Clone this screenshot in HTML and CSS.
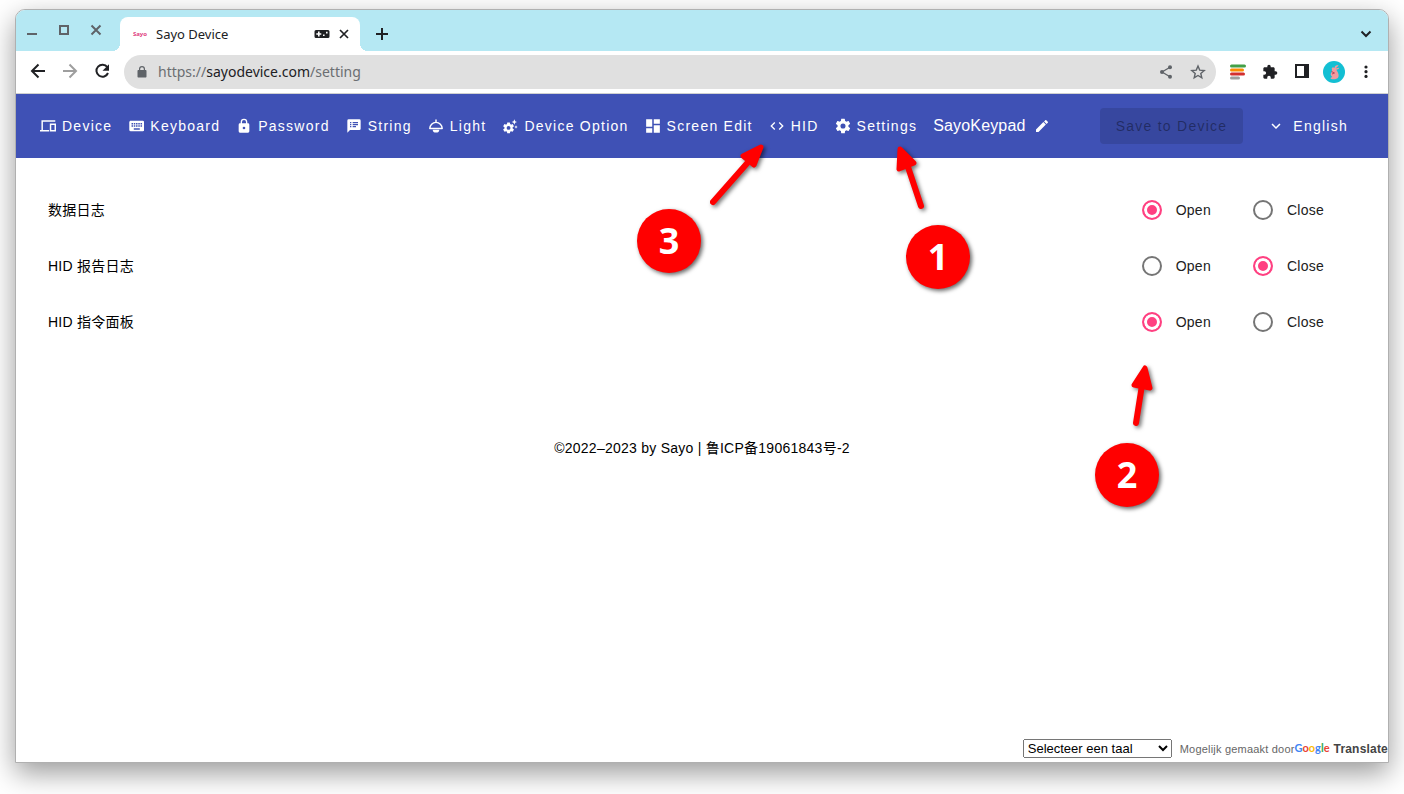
FILE: index.html
```html
<!DOCTYPE html>
<html lang="en">
<head>
<meta charset="utf-8">
<title>Sayo Device</title>
<link rel="stylesheet" href="styles.css">
</head>
<body>
<div class="window">
  <header class="tabstrip">
    <div class="window-buttons">
      <button class="icon-btn" aria-label="Minimize"><svg class="i16" viewBox="0 0 16 16"><path d="M3 12h10" stroke="currentColor" stroke-width="2"/></svg></button>
      <button class="icon-btn" aria-label="Maximize"><svg class="i16" viewBox="0 0 16 16"><path d="M4 4h8v8H4z" fill="none" stroke="currentColor" stroke-width="2"/></svg></button>
      <button class="icon-btn" aria-label="Close window"><svg class="i16" viewBox="0 0 16 16"><path d="M3.500 3.500l9 9M12.500 3.500l-9 9" stroke="currentColor" stroke-width="2"/></svg></button>
    </div>
    <div class="tab">
      <svg class="i16" viewBox="0 0 16 16"><text class="favicon-text" x="8" y="10" text-anchor="middle">Sayo</text></svg>
      <span class="tab-title">Sayo Device</span>
      <svg class="i16" viewBox="0 0 16 16"><path fill="currentColor" fill-rule="evenodd" d="M2 4h12a1.500 1.500 0 0 1 1.500 1.500v5A1.500 1.500 0 0 1 14 12H2A1.500 1.500 0 0 1 .5 10.500v-5A1.500 1.500 0 0 1 2 4zM4 5.500v1.700H2.300v1.600H4v1.700h1.600V8.800h1.700V7.200H5.600V5.500zM9 8.500v1.600h1.600V8.500zM12 5.800v1.600h1.600V5.800z"/></svg>
      <button class="icon-btn" aria-label="Close tab"><svg class="i16" viewBox="0 0 16 16"><path d="M4 4l8 8M12 4l-8 8" stroke="currentColor" stroke-width="1.700"/></svg></button>
    </div>
    <button class="icon-btn new-tab" aria-label="New tab"><svg class="i16" viewBox="0 0 16 16"><path d="M8 2v12M2 8h12" stroke="currentColor" stroke-width="2"/></svg></button>
    <button class="icon-btn tab-search" aria-label="Search tabs"><svg class="i16" viewBox="0 0 16 16"><path d="M3.500 5.500L8 10l4.500-4.500" fill="none" stroke="currentColor" stroke-width="2"/></svg></button>
  </header>

  <div class="toolbar">
    <button class="icon-btn" aria-label="Back"><svg class="i20" viewBox="0 0 20 20"><path d="M17 9H4M10.500 2.500L4 9l6.500 6.500" fill="none" stroke="currentColor" stroke-width="2"/></svg></button>
    <button class="icon-btn faded" aria-label="Forward"><svg class="i20" viewBox="0 0 20 20"><path d="M3 9h13M9.500 2.500L16 9l-6.500 6.500" fill="none" stroke="currentColor" stroke-width="2"/></svg></button>
    <button class="icon-btn" aria-label="Reload"><svg class="i20" viewBox="0 0 20 20"><path d="M15.300 5.200A6 6 0 1 0 16 11" fill="none" stroke="currentColor" stroke-width="2"/><path d="M17 2.200v6.500h-6.500z" fill="currentColor"/></svg></button>
    <div class="omnibox">
      <svg class="i16 lock" viewBox="0 0 16 16"><path fill="currentColor" fill-rule="evenodd" d="M5 6V5a3 3 0 0 1 6 0v1h.5c.6 0 1 .4 1 1v5.500c0 .6-.4 1-1 1h-7c-.6 0-1-.4-1-1V7c0-.6.4-1 1-1zm1.200 0h3.600V5a1.800 1.800 0 0 0-3.600 0z"/></svg>
      <div class="url" role="textbox" contenteditable="true" spellcheck="false" aria-label="Address">https://<b>sayodevice.com</b>/setting</div>
      <button class="icon-btn" aria-label="Share"><svg class="i16" viewBox="0 0 16 16"><g fill="currentColor"><circle cx="12" cy="3.200" r="2"/><circle cx="4" cy="8" r="2"/><circle cx="12" cy="12.800" r="2"/></g><path d="M12 3.200L4 8l8 4.800" fill="none" stroke="currentColor" stroke-width="1.300"/></svg></button>
      <button class="icon-btn" aria-label="Bookmark"><svg class="i16" viewBox="0 0 16 16"><path d="M8 2l1.700 4.100 4.500.4-3.400 2.900 1 4.400L8 11.500l-3.800 2.300 1-4.400-3.400-2.900 4.500-.4z" fill="none" stroke="currentColor" stroke-width="1.400"/></svg></button>
    </div>
    <button class="icon-btn" aria-label="Lines extension"><svg class="i16" viewBox="0 0 16 16"><g stroke-width="3" stroke-linecap="round"><path d="M1.500 2h13" stroke="#43a047"/><path d="M1.500 6h11" stroke="#fb8c00"/><path d="M1.500 10h12" stroke="#d32f2f"/><path d="M1.500 14h7" stroke="#9e9e9e"/></g></svg></button>
    <button class="icon-btn" aria-label="Extensions"><svg class="i16" viewBox="0 0 24 24"><path fill="currentColor" d="M20.500 11H19V7c0-1.100-.9-2-2-2h-4V3.500a2.500 2.500 0 0 0-5 0V5H4c-1.100 0-2 .9-2 2v3.800h1.500a2.700 2.700 0 0 1 0 5.400H2V20c0 1.100.9 2 2 2h3.800v-1.500a2.700 2.700 0 0 1 5.400 0V22H17c1.100 0 2-.9 2-2v-4h1.500a2.500 2.500 0 0 0 0-5z"/></svg></button>
    <button class="icon-btn" aria-label="Side panel"><svg class="i16" viewBox="0 0 16 16"><path fill="currentColor" fill-rule="evenodd" d="M1 0h14v14H1zM3 2v10h7V2z"/></svg></button>
    <button class="icon-btn avatar" aria-label="Profile"><svg viewBox="0 0 22 22"><circle cx="11" cy="11" r="11" fill="#13bfd3"/><path d="M9 8.500C8 6.500 10 6 11.500 7c0-2 1.500-3 4-3-.5 1.500-1.500 2.300-2.700 3 1 .8 2.700-.8 3.500 0-.6 1.200-1.800 1.500-3 1.700.8 1.800 2.700 3.500 2.300 6.300-.2 1.800-1.500 3-3.600 3.200-2 .2-3.500 0-4.500-.8.300-1 1-1.300 1.800-1.500C7.500 14.500 7 12.500 8.800 11z" fill="#f29a9f"/><path d="M8.500 10.500l3 1.500-2.500 1" stroke="#b9475f" fill="none"/></svg></button>
    <button class="icon-btn" aria-label="Menu"><svg class="i16" viewBox="0 0 16 16"><g fill="currentColor"><circle cx="8" cy="3" r="1.600"/><circle cx="8" cy="7.700" r="1.600"/><circle cx="8" cy="12.400" r="1.600"/></g></svg></button>
  </div>

  <nav class="appbar">
    <a class="nav-link" href="#device"><svg class="i16" viewBox="1 1 22 22"><path d="M22 5H4v13M1 18.500h12.500M15.500 9.500h6.500v9h-6.500z" fill="none" stroke="currentColor" stroke-width="2"/></svg>Device</a>
    <a class="nav-link" href="#keyboard"><svg class="i16" viewBox="0.300 1.300 21.300 21.300"><path fill="currentColor" d="M19 10h-2V8h2m0 5h-2v-2h2m-3-1h-2V8h2m0 5h-2v-2h2m0 6H8v-2h8m-9-5H5V8h2m0 5H5v-2h2m1 0h2v2H8m0-5h2v2H8m3 1h2v2h-2m0-5h2v2h-2m9-5H4c-1.110 0-2 .89-2 2v10a2 2 0 0 0 2 2h16a2 2 0 0 0 2-2V7c0-1.110-.9-2-2-2z"/></svg>Keyboard</a>
    <a class="nav-link" href="#password"><svg class="i16" viewBox="0 0 24 24"><path fill="currentColor" d="M12 17a2 2 0 0 0 2-2 2 2 0 0 0-2-2 2 2 0 0 0-2 2 2 2 0 0 0 2 2m6-9a2 2 0 0 1 2 2v10a2 2 0 0 1-2 2H6a2 2 0 0 1-2-2V10a2 2 0 0 1 2-2h1V6a5 5 0 0 1 10 0v2h1m-6-5a3 3 0 0 0-3 3v2h6V6a3 3 0 0 0-3-3z"/></svg>Password</a>
    <a class="nav-link" href="#string"><svg class="i16" viewBox="0 0 24 24"><path fill="currentColor" fill-rule="evenodd" d="M20 2H4a2 2 0 0 0-2 2v18l4-4h14a2 2 0 0 0 2-2V4a2 2 0 0 0-2-2zM8 14H6v-2h2zm0-3H6V9h2zm0-3H6V6h2zm7 6h-5v-2h5zm3-3h-8V9h8zm0-3h-8V6h8z"/></svg>String</a>
    <a class="nav-link" href="#light"><svg class="i16" viewBox="1 1 22 22"><path d="M12 3v4M3.500 15.500a8.500 8.500 0 0 1 17 0z" fill="none" stroke="currentColor" stroke-width="2" stroke-linejoin="round"/><path d="M7.500 17h9a4.500 4 0 0 1-9 0z" fill="currentColor"/></svg>Light</a>
    <a class="nav-link" href="#option"><svg class="i16" viewBox="0 0 24 24"><g transform="translate(0 5) scale(.82)"><path fill="currentColor" d="M12 15.500A3.500 3.500 0 0 1 8.500 12 3.500 3.500 0 0 1 12 8.500a3.500 3.500 0 0 1 3.500 3.500 3.500 3.500 0 0 1-3.500 3.500m7.430-2.530c.04-.32.070-.64.070-.97s-.03-.66-.07-1l2.110-1.630c.19-.15.240-.42.120-.64l-2-3.460c-.12-.22-.39-.31-.61-.22l-2.490 1c-.52-.39-1.060-.73-1.690-.98l-.37-2.650A.506.506 0 0 0 14 2h-4c-.25 0-.46.180-.5.420l-.37 2.650c-.63.250-1.170.590-1.690.980l-2.490-1c-.22-.09-.49 0-.61.220l-2 3.460c-.13.220-.07.490.120.640L4.570 11c-.04.340-.07.670-.07 1s.03.650.070.970l-2.110 1.660c-.19.150-.25.420-.12.640l2 3.460c.12.220.39.300.61.220l2.490-1.010c.52.400 1.060.740 1.690.990l.37 2.650c.04.240.25.420.5.420h4c.25 0 .46-.18.5-.42l.37-2.650c.63-.26 1.170-.59 1.690-.99l2.490 1.010c.22.080.49 0 .61-.22l2-3.460c.12-.22.070-.49-.12-.64z"/></g><path fill="currentColor" d="M18.500 2l1.200 2.800 2.800 1.200-2.800 1.200L18.500 10l-1.200-2.800L14.500 6l2.800-1.200zM21 11l.8 1.700 1.700.8-1.700.8L21 16l-.8-1.700-1.700-.8 1.700-.8z"/></svg>Device Option</a>
    <a class="nav-link" href="#screen"><svg class="i16" viewBox="1.500 1.500 21 21"><path fill="currentColor" d="M13 3v6h8V3m-8 18h8V11h-8M3 21h8v-6H3m0-2h8V3H3v10z"/></svg>Screen Edit</a>
    <a class="nav-link" href="#hid"><svg class="i16" viewBox="0 0 24 24"><path fill="currentColor" d="M14.600 16.600l4.600-4.600-4.600-4.600L16 6l6 6-6 6-1.400-1.400m-5.200 0L4.800 12l4.600-4.600L8 6l-6 6 6 6 1.400-1.400z"/></svg>HID</a>
    <a class="nav-link" href="#settings"><svg class="i16" viewBox="1 1 22 22"><path fill="currentColor" d="M12 15.500A3.500 3.500 0 0 1 8.500 12 3.500 3.500 0 0 1 12 8.500a3.500 3.500 0 0 1 3.500 3.500 3.500 3.500 0 0 1-3.500 3.500m7.430-2.530c.04-.32.070-.64.070-.97s-.03-.66-.07-1l2.110-1.630c.19-.15.240-.42.120-.64l-2-3.460c-.12-.22-.39-.31-.61-.22l-2.490 1c-.52-.39-1.060-.73-1.690-.98l-.37-2.650A.506.506 0 0 0 14 2h-4c-.25 0-.46.180-.5.420l-.37 2.650c-.63.250-1.170.590-1.690.980l-2.490-1c-.22-.09-.49 0-.61.220l-2 3.460c-.13.220-.07.490.120.640L4.570 11c-.04.340-.07.670-.07 1s.03.650.070.970l-2.110 1.660c-.19.150-.25.420-.12.640l2 3.460c.12.220.39.300.61.220l2.490-1.010c.52.400 1.060.740 1.690.990l.37 2.650c.04.240.25.420.5.420h4c.25 0 .46-.18.5-.42l.37-2.650c.63-.26 1.170-.59 1.690-.99l2.490 1.010c.22.080.49 0 .61-.22l2-3.460c.12-.22.070-.49-.12-.64z"/></svg>Settings</a>
    <button class="device-name">SayoKeypad<svg class="i16" viewBox="0 0 24 24"><path fill="currentColor" d="M20.710 7.040c.39-.39.390-1.040 0-1.410l-2.340-2.340c-.37-.39-1.020-.39-1.410 0l-1.840 1.830 3.750 3.750M3 17.250V21h3.750L17.810 9.930l-3.750-3.750z"/></svg></button>
    <button class="save" disabled>Save to Device</button>
    <button class="language"><svg class="i18" viewBox="0 0 24 24"><path fill="currentColor" d="M7.410 8.580L12 13.170l4.590-4.590L18 10l-6 6-6-6z"/></svg>English</button>
  </nav>

  <main class="settings">
    <fieldset class="row">
      <legend class="row-title" lang="zh">数据日志</legend>
      <div class="choices">
        <label class="choice"><input class="radio" type="radio" name="data-log" checked>Open</label>
        <label class="choice"><input class="radio" type="radio" name="data-log">Close</label>
      </div>
    </fieldset>
    <fieldset class="row">
      <legend class="row-title" lang="zh">HID 报告日志</legend>
      <div class="choices">
        <label class="choice"><input class="radio" type="radio" name="hid-log">Open</label>
        <label class="choice"><input class="radio" type="radio" name="hid-log" checked>Close</label>
      </div>
    </fieldset>
    <fieldset class="row">
      <legend class="row-title" lang="zh">HID 指令面板</legend>
      <div class="choices">
        <label class="choice"><input class="radio" type="radio" name="hid-panel" checked>Open</label>
        <label class="choice"><input class="radio" type="radio" name="hid-panel">Close</label>
      </div>
    </fieldset>
  </main>

  <footer class="copyright">©2022–2023 by Sayo | 鲁ICP备19061843号-2</footer>

  <div class="translate">
    <select class="translate-select" aria-label="Selecteer een taal"><option>Selecteer een taal</option></select>
    <div class="translate-credit">Mogelijk gemaakt door<a class="google" href="#translate"><span class="google-logo"><span class="g-blue">G</span><span class="g-red">o</span><span class="g-yellow">o</span><span class="g-blue">g</span><span class="g-green">l</span><span class="g-red">e</span></span><span>Translate</span></a></div>
  </div>
</div>

<svg class="arrows" width="1404" height="794" viewBox="0 0 1404 794" aria-hidden="true">
  <g fill="red" stroke="red" stroke-width="5" stroke-linecap="round" stroke-linejoin="round">
    <path d="M761 147l-18 9 11 9z"/><path d="M713 202l37-42" stroke-width="6"/>
    <path d="M900 149l14 14-15 6z"/><path d="M921 206l-14-42" stroke-width="6"/>
    <path d="M1145 368l5 20-16-3z"/><path d="M1136 423l6-38" stroke-width="6"/>
  </g>
</svg>
<div class="marker marker-1">1</div>
<div class="marker marker-2">2</div>
<div class="marker marker-3">3</div>
</body>
</html>
```
FILE: styles.css
```css
* { box-sizing: border-box; }

body {
  margin: 0;
  min-height: 100vh;
  padding: 9px 15px 31px;
  display: flex;
  flex-direction: column;
  position: relative;
  overflow: hidden;
  background: #fff;
  color: #000;
  font-family: "Liberation Sans", "Noto Sans CJK SC", sans-serif;
  font-size: 14px;
  line-height: 20px;
}

button { border: 0; padding: 0; background: none; color: inherit; font: inherit; letter-spacing: inherit; }
svg { display: block; flex: none; }
.i16 { width: 16px; height: 16px; }
.i18 { width: 18px; height: 18px; }
.i20 { width: 20px; height: 20px; }

.window {
  flex: 1;
  display: flex;
  flex-direction: column;
  border: 1px solid #b0b0b0;
  border-radius: 10px 10px 0 0;
  background: #fff;
  box-shadow: 0 10px 28px rgba(0, 0, 0, .4);
}

.tabstrip {
  display: flex;
  align-items: flex-end;
  height: 41px;
  border-radius: 9px 9px 0 0;
  background: #b5e8f3;
  color: #202124;
}
.window-buttons { display: flex; gap: 16px; padding: 0 16px 13px 8px; color: #5f6368; }
.tab {
  position: relative;
  display: flex;
  align-items: center;
  width: 240px;
  height: 34px;
  padding: 0 8px 0 12px;
  gap: 6px;
  border-radius: 8px 8px 0 0;
  background: #fff;
  font: 13px/18px "Noto Sans", sans-serif;
}
.tab::before, .tab::after {
  content: "";
  position: absolute;
  bottom: 0;
  width: 8px;
  height: 8px;
}
.tab::before { right: 100%; background: radial-gradient(circle at 0 0, transparent 8px, #fff 8px); }
.tab::after { left: 100%; background: radial-gradient(circle at 100% 0, transparent 8px, #fff 8px); }
.favicon-text { fill: #e0407f; font: bold 6px "Noto Sans", sans-serif; }
.tab-title { flex: 1; padding-left: 2px; }
.new-tab { padding: 0 0 9px 14px; }
.tab-search { margin-left: auto; padding: 0 14px 9px 0; }

.toolbar {
  display: flex;
  align-items: center;
  gap: 12px;
  height: 43px;
  padding: 0 12px;
  border-bottom: 1px solid #d0d0d0;
  color: #202124;
}
.toolbar > .icon-btn { width: 20px; display: flex; justify-content: center; }
.toolbar > .faded { color: #9e9e9e; }
.omnibox {
  flex: 1;
  display: flex;
  align-items: center;
  gap: 16px;
  height: 34px;
  padding: 0 10px;
  border-radius: 17px;
  background: #e0e0e0;
  color: #5f6368;
}
.lock { margin-right: -8px; }
.url { flex: 1; outline: 0; color: #6b6e72; font: 14px/20px "Noto Sans", sans-serif; }
.url b { color: #202124; font-weight: 400; }
.avatar svg { width: 22px; height: 22px; }

.appbar {
  display: flex;
  align-items: center;
  gap: 16px;
  height: 64px;
  padding: 0 24px;
  background: #3f51b5;
  color: #fff;
  letter-spacing: .0893em;
  white-space: nowrap;
}
.nav-link { display: flex; align-items: center; gap: 6px; color: inherit; text-decoration: none; }
.device-name { display: flex; align-items: center; gap: 8px; font-size: 16px; letter-spacing: .01em; }
.save {
  height: 36px;
  margin-left: auto;
  padding: 0 16px;
  border-radius: 4px;
  background: rgba(0, 0, 0, .12);
  color: rgba(0, 0, 0, .38);
}
.language { display: flex; align-items: center; gap: 8px; margin-left: -8px; padding: 0 16px; }

.settings { padding: 24px 64px 0 32px; letter-spacing: .018em; }
.row {
  display: flex;
  align-items: center;
  margin: 0;
  padding: 18px 0;
  border: 0;
}
.row-title { float: left; padding: 0; }
.choices { display: flex; gap: 42px; margin-left: auto; color: #212121; }
.choice { display: flex; align-items: center; gap: 14px; }
.radio {
  appearance: none;
  width: 20px;
  height: 20px;
  margin: 0;
  border: 2px solid #757575;
  border-radius: 50%;
}
.radio:checked { border-color: #ff4081; background: #ff4081; box-shadow: inset 0 0 0 3px #fff; }

.copyright { padding-top: 88px; text-align: center; letter-spacing: .018em; }

.translate {
  display: flex;
  align-items: center;
  justify-content: flex-end;
  gap: 8px;
  margin-top: auto;
  padding-bottom: 4px;
}
.translate-select { width: 149px; height: 19px; font: 13px "Liberation Sans", sans-serif; }
.translate-credit { display: flex; color: #666; font-size: 11px; line-height: 16px; letter-spacing: .018em; }
.google { display: flex; gap: 4px; color: #444; font-size: 12px; font-weight: 700; text-decoration: none; }
.google-logo { font: 700 11px/14px Lato, sans-serif; letter-spacing: 0; }
.g-blue { color: #4285f4; }
.g-red { color: #ea4335; }
.g-yellow { color: #fbbc05; }
.g-green { color: #34a853; }

.arrows, .marker { position: absolute; pointer-events: none; }
.arrows { top: 0; left: 0; filter: drop-shadow(2px 2px 2px rgba(0, 0, 0, .55)); }
.marker {
  width: 64px;
  height: 64px;
  border-radius: 50%;
  background: red;
  color: #fff;
  box-shadow: 2px 2px 4px rgba(0, 0, 0, .6);
  font: 700 36px/64px "Noto Sans", sans-serif;
  text-align: center;
}
.marker-1 { left: 906px; top: 225px; }
.marker-2 { left: 1095px; top: 443px; }
.marker-3 { left: 637px; top: 209px; }
```
